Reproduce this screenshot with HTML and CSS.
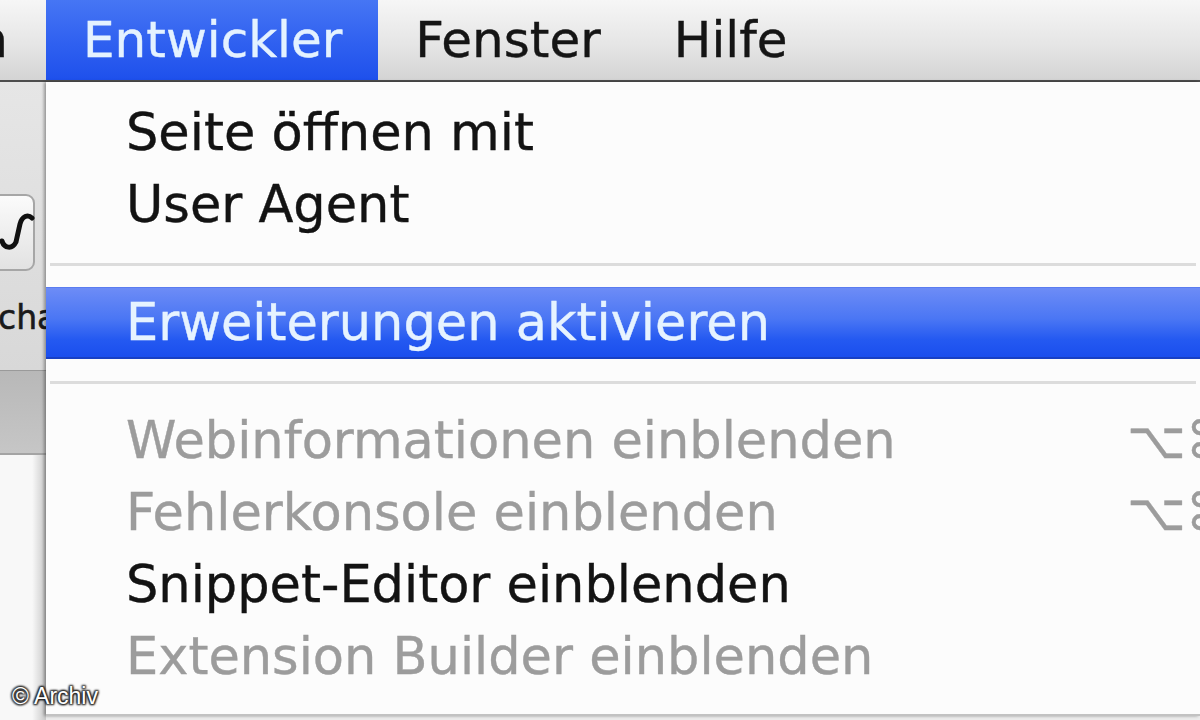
FILE: index.html
```html
<!DOCTYPE html>
<html lang="de">
<head>
    <meta charset="UTF-8">
    <meta name="viewport" content="width=device-width, initial-scale=1.0">
    <title>Safari – Entwickler-Menü</title>
    <link rel="stylesheet" href="styles.css">
</head>
<body>
    <div id="screen">

        <header class="menubar">
            <div class="menubar-cut"><span>Lesezeichen</span></div>
            <div class="menubar-item open">Entwickler</div>
            <div class="menubar-item">Fenster</div>
            <div class="menubar-item">Hilfe</div>
        </header>

        <div class="below">
            <!-- what is left of the Safari window behind the menu -->
            <aside class="window-edge">
                <div class="toolbar-area">
                    <div class="tool-button">
                        <svg width="50" height="77" viewBox="0 0 50 77">
                            <path d="M2 47 C 4 54, 12 56, 16 48 L 20 30 C 22 22, 28 20, 32 24" fill="none" stroke="#111" stroke-width="5" stroke-linecap="round"/>
                        </svg>
                    </div>
                    <div class="tool-label">cha</div>
                </div>
                <div class="tab-strip"></div>
                <div class="page-edge"></div>
            </aside>

            <ul class="dropdown">
                <li class="item">Seite öffnen mit</li>
                <li class="item">User Agent</li>
                <li class="separator"></li>
                <li class="item selected">Erweiterungen aktivieren</li>
                <li class="separator"></li>
                <li class="item disabled"><span class="label">Webinformationen einblenden</span><span class="key">⌥⌘I</span></li>
                <li class="item disabled"><span class="label">Fehlerkonsole einblenden</span><span class="key">⌥⌘C</span></li>
                <li class="item">Snippet-Editor einblenden</li>
                <li class="item disabled">Extension Builder einblenden</li>
            </ul>
        </div>

        <div class="credit">© Archiv</div>
    </div>
</body>
</html>
```

FILE: styles.css
```css
* {
    box-sizing: border-box;
}
html, body {
    margin: 0;
    padding: 0;
}
body {
    background-color: #ececec;
    font-family: "DejaVu Sans", "Liberation Sans", sans-serif;
}
#screen {
    position: relative;
    width: 1200px;
    height: 720px;
    overflow: hidden;
    display: flex;
    flex-direction: column;
}

/* menu bar */
.menubar {
    display: flex;
    height: 82px;
    flex-shrink: 0;
    background: linear-gradient(#f6f6f6, #e4e4e4 60%, #d4d4d4);
    border-bottom: 2px solid #4e4e4e;
    font-size: 50px;
    line-height: 80px;
    color: #151515;
    -webkit-text-stroke: 0.4px currentColor;
}
.menubar-cut {
    width: 46px;
    overflow: hidden;
    display: flex;
    justify-content: flex-end;
}
.menubar-cut span {
    padding-right: 38px;
    white-space: nowrap;
}
.menubar-item {
    padding: 0 36px 0 37px;
    white-space: nowrap;
}
.menubar-item.open {
    background: linear-gradient(#4676f4, #2f60f0 55%, #1e50ec);
    color: #e4f2ff;
}

.below {
    display: flex;
    flex: 1;
    min-height: 0;
}

/* window behind the menu */
.window-edge {
    width: 46px;
    flex-shrink: 0;
    display: flex;
    flex-direction: column;
    overflow: hidden;
}
.toolbar-area {
    height: 288px;
    background: linear-gradient(#e6e6e6, #d8d8d8);
    padding-top: 112px;
}
.tool-button {
    width: 50px;
    height: 77px;
    margin-left: -15px;
    border: 2px solid #a6a6a6;
    border-radius: 9px;
    background: linear-gradient(#fbfbfb, #e2e2e2);
    padding-left: 13px;
}
.tool-button svg {
    display: block;
    margin-top: -2px;
}
.tool-label {
    margin-top: 27px;
    margin-left: -2px;
    font-size: 33px;
    line-height: 40px;
    color: #1a1a1a;
    white-space: nowrap;
    -webkit-text-stroke: 0.6px currentColor;
}
.tab-strip {
    height: 85px;
    background: linear-gradient(#b8b8b8, #c6c6c6);
    border-top: 1px solid #9a9a9a;
    border-bottom: 2px solid #a4a4a4;
}
.page-edge {
    flex: 1;
    background: linear-gradient(to right, #f8f8f8 70%, #c8c8c8);
}

/* the open menu */
.dropdown {
    list-style: none;
    margin: 0;
    flex: 1;
    align-self: flex-start;
    padding: 15px 0 21px;
    background: #fcfcfc;
    border-bottom: 2px solid #c2c2c2;
    box-shadow: -2px 0 3px rgba(0, 0, 0, 0.35);
    font-size: 51px;
    color: #131313;
    -webkit-text-stroke: 0.4px currentColor;
}
.item {
    display: flex;
    height: 72px;
    line-height: 72px;
    padding-left: 80px;
    white-space: nowrap;
}
.item .label {
    flex: 1;
}
.item .key {
    width: 73px;
    overflow: hidden;
}
.item.disabled {
    color: #9c9c9c;
}
.item.selected {
    background: linear-gradient(#6d8cf6, #4a76f4 45%, #2459f1 75%, #1a4eee);
    border-top: 1px solid #5a7cf0;
    border-bottom: 2px solid #1840c4;
    line-height: 69px;
    color: #e6f3ff;
}
.separator {
    height: 46px;
    display: flex;
    align-items: center;
    padding: 0 4px;
}
.separator::after {
    content: "";
    flex: 1;
    height: 3px;
    background: #dcdcdc;
}

.credit {
    position: absolute;
    left: 12px;
    bottom: 10px;
    font-family: "Liberation Sans", Arial, sans-serif;
    font-size: 23px;
    color: #fff;
    text-shadow: 0 0 2px #222, 1px 1px 2px #222, -1px -1px 2px #222, 1px -1px 2px #222, -1px 1px 2px #222;
}
```
